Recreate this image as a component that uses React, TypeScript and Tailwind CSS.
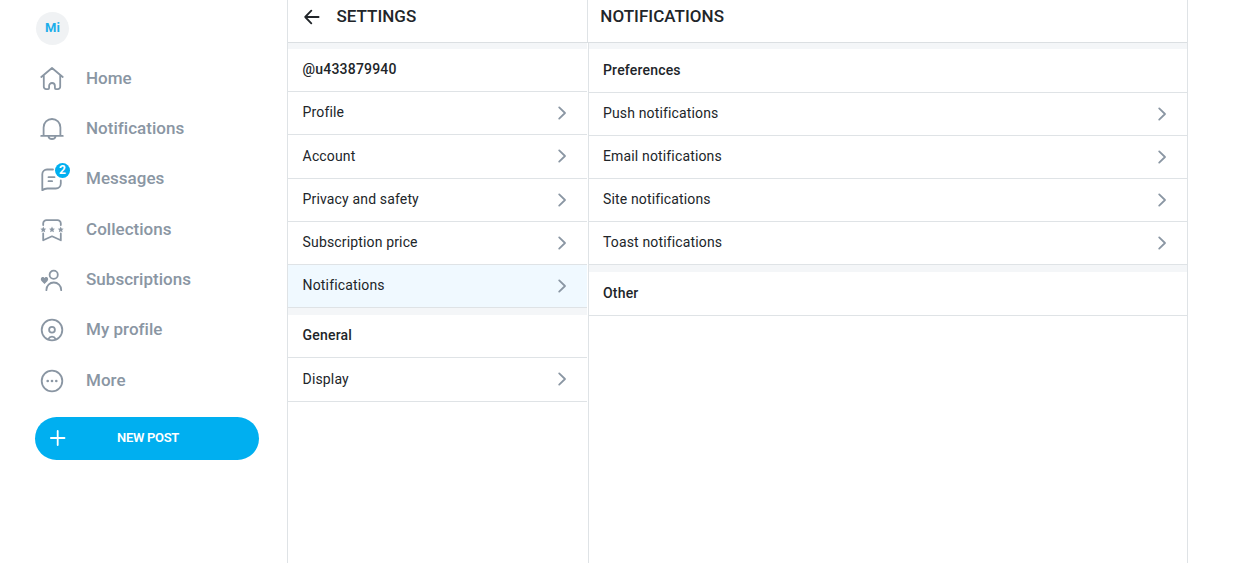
import React from "react";

const HomeIcon = () => (
  <path d="M1.300 10 12 1l10.700 9M3.800 8.200v11.600a2.300 2.300 0 0 0 2.300 2.300h2c.600 0 1-.400 1-1v-2.200a2.900 2.900 0 0 1 5.800 0v2.200c0 .600.400 1 1 1h2a2.300 2.300 0 0 0 2.300-2.300V8.200" />
);

const BellIcon = () => (
  <path d="M1.200 18.900h21.600M3.600 18.400V10.400a8.400 8.400 0 0 1 16.800 0v8M8.500 19.700a3.600 3 0 0 0 7 0" />
);

const MessageIcon = () => (
  <path d="M13 2.500H7a4.700 4.700 0 0 0-4.700 4.700v16c1.600-1.300 3-1.700 5-1.700h8.500a5 5 0 0 0 5-5v-3M8.500 10.200h6M8.500 14.200h3.600" />
);

const STAR = "m0-2.900.9 1.900 2.100.2-1.600 1.400.5 2.100L0 1.700l-1.900 1 .5-2.100L-3-.8l2.100-.2z";

const CollectionsIcon = () => (
  <>
    <path d="M3.200 7V5.500a3.300 3.300 0 0 1 3.300-3.300h11a3.300 3.300 0 0 1 3.300 3.300V7M3.200 15.500v6.800l8.800-4 8.800 4v-6.800" />
    <g fill="currentColor" stroke="none">
      <path transform="translate(3.300 11.500)" d={STAR} />
      <path transform="translate(12 11.500)" d={STAR} />
      <path transform="translate(20.700 11.500)" d={STAR} />
    </g>
  </>
);

const SubscriptionsIcon = () => (
  <g transform="translate(0 0.700)">
    <circle cx="13.700" cy="6" r="4.100" />
    <path d="M6.400 21.500v-.300a7.400 7.400 0 0 1 14.800 0v.300" />
    <path
      fill="currentColor"
      stroke="none"
      d="M4.500 15.400 1.500 12.300C.2 10.700 1 8.300 2.700 8.300c.9 0 1.500.5 1.800 1.100.3-.6.900-1.100 1.800-1.100 1.700 0 2.500 2.400 1.200 4z"
    />
  </g>
);

const ProfileIcon = () => (
  <>
    <circle cx="12" cy="12" r="10.300" />
    <circle cx="12" cy="11.800" r="2.900" />
    <path d="M8.500 20.900c.6-1.400 1.900-2.200 3.500-2.200s2.900.8 3.500 2.200" />
  </>
);

const MoreIcon = () => (
  <>
    <circle cx="12" cy="12" r="10.300" />
    <g fill="currentColor" stroke="none">
      <circle cx="7.700" cy="12" r="1.300" />
      <circle cx="12" cy="12" r="1.300" />
      <circle cx="16.300" cy="12" r="1.300" />
    </g>
  </>
);

const navItems: { label: string; icon: React.ReactNode; badge?: number }[] = [
  { label: "Home", icon: <HomeIcon /> },
  { label: "Notifications", icon: <BellIcon /> },
  { label: "Messages", icon: <MessageIcon />, badge: 2 },
  { label: "Collections", icon: <CollectionsIcon /> },
  { label: "Subscriptions", icon: <SubscriptionsIcon /> },
  { label: "My profile", icon: <ProfileIcon /> },
  { label: "More", icon: <MoreIcon /> },
];

function Sidebar() {
  return (
    <aside className="flex w-[287px] shrink-0 flex-col pt-3">
      <div className="ml-9 flex size-[33px] shrink-0 items-center justify-center rounded-full bg-[#f0f2f4] pb-px text-[13px] font-bold text-[#1caeea]">
        Mi
      </div>
      <nav className="mt-[8.400px] flex flex-col">
        {navItems.map((item) => (
          <a key={item.label} className="flex h-[50.330px] items-center pl-10 text-[#8a96a3]">
            <span className="relative mr-[22px] block size-6">
              <svg
                viewBox="0 0 24 24"
                className="size-6"
                fill="none"
                stroke="currentColor"
                strokeWidth="1.800"
                strokeLinecap="round"
                strokeLinejoin="round"
              >
                {item.icon}
              </svg>
              {item.badge && (
                <span className="absolute -top-[4px] left-[15px] flex h-[15px] w-[15px] items-center justify-center rounded-full bg-[#00aff0] pb-px text-[12px] leading-none font-bold text-white">
                  {item.badge}
                </span>
              )}
            </span>
            <span className="text-[17px] font-medium tracking-[0.030px]">{item.label}</span>
          </a>
        ))}
      </nav>
      <button className="mt-[11.600px] ml-[35px] flex h-[43px] w-[224px] items-center rounded-full bg-[#00aff0] pl-[15px] text-[13px] font-medium text-white">
        <svg viewBox="0 0 16 16" className="mb-px size-4" fill="none" stroke="currentColor" strokeWidth="1.800" strokeLinecap="round">
          <path d="M7.700 1v14M.9 8h13.600" />
        </svg>
        <span className="ml-[51px] pb-[3px] font-semibold tracking-[-0.300px]">NEW POST</span>
      </button>
    </aside>
  );
}

function Row({ label, height, active }: { label: string; height: string; active?: boolean }) {
  return (
    <a
      className={`flex ${height} items-center justify-between border-b border-[#dfe3e6] pr-[20px] ${active ? "bg-[#f0f9ff]" : ""}`}
    >
      <span className="pb-px text-[14px] tracking-[0.150px]">{label}</span>
      <svg
        viewBox="0 0 10 14"
        className="mb-px h-[14px] w-[10px] text-[#8a96a3]"
        fill="none"
        stroke="currentColor"
        strokeWidth="1.800"
        strokeLinecap="round"
        strokeLinejoin="round"
      >
        <path d="m2.200 1.400 5.800 5.600-5.800 5.600" />
      </svg>
    </a>
  );
}

function Heading({ label, height }: { label: string; height: string }) {
  return (
    <h2 className={`flex ${height} items-center border-b border-[#dfe3e6] text-[14px] font-medium tracking-[0.190px]`}>
      {label}
    </h2>
  );
}

export default function App() {
  return (
    <div className="flex h-[563px] w-[1259px] overflow-hidden bg-white font-['Roboto',sans-serif] text-[#212529]">
      <Sidebar />
      <main className="flex w-[901px] flex-col border-x border-[#dfe3e6]">
        <header className="flex h-[43px] shrink-0 border-b border-[#dbdfe2] text-[17px] font-medium tracking-[0.030px]">
          <div className="flex w-[299px] items-center pb-[9px] pl-[16px]">
            <svg
              viewBox="0 0 16 16"
              className="mt-px mr-[16.400px] size-4"
              fill="none"
              stroke="currentColor"
              strokeWidth="1.800"
              strokeLinecap="round"
              strokeLinejoin="round"
            >
              <path d="M14.600 8H1.200M7.300 1.700 1.200 8l6.100 6.300" />
            </svg>
            SETTINGS
          </div>
          <div className="flex flex-1 items-center border-l border-[#dfe3e6] pb-[9px] pl-[12.300px]">NOTIFICATIONS</div>
        </header>
        <div className="flex flex-1">
          <section className="mr-px w-[299px]">
            <div className="h-1.5 bg-[#f4f6f8]" />
            <Heading label="@u433879940" height="h-[43px] pb-[2px] pl-[14.600px]" />
            <Row label="Profile" height="h-[43px] pl-[14.600px]" />
            <Row label="Account" height="h-[44px] pl-[14.600px]" />
            <Row label="Privacy and safety" height="h-[43px] pl-[14.600px]" />
            <Row label="Subscription price" height="h-[43px] pl-[14.600px]" />
            <Row label="Notifications" height="h-[43px] pl-[14.600px]" active />
            <div className="h-[7px] bg-[#f4f6f8]" />
            <Heading label="General" height="h-[43px] pb-[2px] pl-[14.600px]" />
            <Row label="Display" height="h-[44px] pl-[14.600px]" />
          </section>
          <section className="flex-1 border-l border-[#dfe3e6]">
            <div className="h-1.5 bg-[#f4f6f8]" />
            <Heading label="Preferences" height="h-[44px] pl-[14px]" />
            <Row label="Push notifications" height="h-[43px] pl-[14px]" />
            <Row label="Email notifications" height="h-[43px] pl-[14px]" />
            <Row label="Site notifications" height="h-[43px] pl-[14px]" />
            <Row label="Toast notifications" height="h-[43px] pl-[14px]" />
            <div className="h-[7px] bg-[#f4f6f8]" />
            <Heading label="Other" height="h-[44px] pl-[14px]" />
          </section>
        </div>
      </main>
    </div>
  );
}
